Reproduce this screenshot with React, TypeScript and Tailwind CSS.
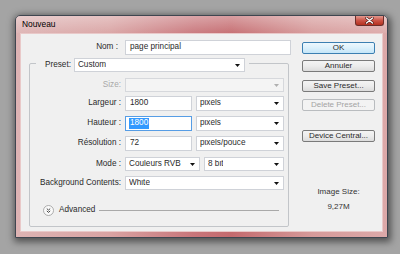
import React from "react";

const Arrow = ({ gray }: { gray?: boolean }) => (
  <svg width="5" height="3" viewBox="0 0 5 3" className="shrink-0">
    <path d="M0 0H5L2.5 3Z" fill={gray ? "#b0b0b0" : "#111"} />
  </svg>
);

function Dropdown({ className, text, disabled }: { className: string; text?: string; disabled?: boolean }) {
  return (
    <div
      className={`flex items-center justify-between border pl-[3px] pr-[4px] ${
        disabled ? "bg-[#f4f4f4] border-[#d6d8dc]" : "bg-white border-[#cfd2d8]"
      } ${className}`}
    >
      <span className="truncate leading-none">{text}</span>
      <Arrow gray={disabled} />
    </div>
  );
}

function Input({ className, text, focused }: { className: string; text: string; focused?: boolean }) {
  return (
    <div
      className={`flex items-center bg-white border pl-[3px] ${
        focused ? "border-[#569de5]" : "border-[#cfd2d8]"
      } ${className}`}
    >
      {focused ? (
        <span className="bg-[#3399ff] text-white leading-none px-[1px] py-[1px]">{text}</span>
      ) : (
        <span className="leading-none pl-[1px]">{text}</span>
      )}
    </div>
  );
}

function Button({ text, primary, disabled, className }: { text: string; primary?: boolean; disabled?: boolean; className: string }) {
  return (
    <div
      className={`h-[12px] w-[73px] flex items-center justify-center rounded-[2px] border leading-none ${
        primary
          ? "border-[#3c7fb1] bg-[linear-gradient(#eef8fd,#dcf0fb_50%,#c4e6f8)]"
          : disabled
          ? "border-[#b9bcbf] bg-[#f3f3f3] text-[#a3a3a3]"
          : "border-[#7a7a7a] bg-[linear-gradient(#f4f4f4,#ececec_50%,#dcdcdc)]"
      } ${className}`}
    >
      {text}
    </div>
  );
}

function Row({ label, children, className, gray }: { label: string; children: React.ReactNode; className: string; gray?: boolean }) {
  return (
    <div className={`flex items-center ${className}`}>
      <div className={`w-[92px] text-right pr-[1px] leading-none ${gray ? "text-[#a8a8a8]" : ""}`}>{label}</div>
      <div className="ml-[3px] flex items-center gap-[4px]">{children}</div>
    </div>
  );
}

export default function App() {
  return (
    <div className="w-[400px] h-[254px] overflow-hidden bg-[#a4a4a4] pt-[15px] pl-[15px] font-['Liberation_Sans',Arial,sans-serif] text-[8.2px] text-[#2a2a2a]">
      <div className="w-[373px] h-[223px] flex flex-col rounded-t-[5px] border border-[#3f4650] bg-[linear-gradient(90deg,#ddb3b3_0%,#d9a3a3_25%,#c8757a_48%,#c46a6e_58%,#d69a9a_80%,#dca9a9_100%)] shadow-[1px_2px_7px_2px_rgba(0,0,0,0.5)]">
        {/* Title bar */}
        <div className="h-[17px] flex items-start justify-between bg-[linear-gradient(rgba(255,255,255,0.35),rgba(255,255,255,0.05))] rounded-t-[4px]">
          <span className="pl-[6px] pt-[4px] text-[8.4px] leading-none text-black">Nouveau</span>
          <div className="mr-[3px] w-[29px] h-[10px] flex items-center justify-center rounded-b-[3px] border border-t-0 border-[#6b2e2a] bg-[linear-gradient(#e49a90,#cc5346_50%,#b4301f)]">
            <svg width="9" height="7" viewBox="0 0 9 7">
              <path d="M1.5 1L7.5 6M7.5 1L1.5 6" stroke="#4a1a16" strokeWidth="2.6" strokeLinecap="round" />
              <path d="M1.5 1L7.5 6M7.5 1L1.5 6" stroke="#fff" strokeWidth="1.4" strokeLinecap="round" />
            </svg>
          </div>
        </div>
        {/* Client area */}
        <div className="mx-[4px] h-[199px] bg-[#f0f0f0] border border-[#e9c9c9] flex">
          {/* Left column */}
          <div className="w-[281px] flex flex-col">
            <div className="mt-[6px] flex items-center">
              <div className="w-[97px] text-right leading-none">Nom :</div>
              <Input className="ml-[7px] w-[166px] h-[15px]" text="page principal" />
            </div>
            <fieldset className="ml-[8px] mt-[3px] w-[260px] h-[169px] border border-[#c2c5c9] rounded-[2px] p-0 m-0 flex flex-col">
              <legend className="ml-[6px] pl-[9px] pr-[4px] h-[10px] p-0">
                <div className="flex items-center h-[14px]">
                  <span className="leading-none">Preset:</span>
                  <Dropdown className="ml-[3px] w-[171px] h-[14px]" text="Custom" />
                </div>
              </legend>
              <Row label="Size:" gray className="mt-[10px]">
                <Dropdown className="w-[159px] h-[14px]" disabled />
              </Row>
              <Row label="Largeur :" className="mt-[4px]">
                <Input className="w-[67px] h-[15px]" text="1800" />
                <Dropdown className="w-[88px] h-[15px]" text="pixels" />
              </Row>
              <Row label="Hauteur :" className="mt-[5px]">
                <Input className="w-[67px] h-[15px]" text="1800" focused />
                <Dropdown className="w-[88px] h-[15px]" text="pixels" />
              </Row>
              <Row label="Résolution :" className="mt-[5px]">
                <Input className="w-[67px] h-[15px]" text="72" />
                <Dropdown className="w-[88px] h-[15px]" text="pixels/pouce" />
              </Row>
              <Row label="Mode :" className="mt-[6px]">
                <Dropdown className="w-[75px] h-[14px]" text="Couleurs RVB" />
                <Dropdown className="w-[80px] h-[14px]" text="8 bit" />
              </Row>
              <Row label="Background Contents:" className="mt-[5px]">
                <Dropdown className="w-[159px] h-[14px]" text="White" />
              </Row>
              <div className="mt-[15px] ml-[13px] mr-[9px] flex items-center">
                <svg width="11" height="11" viewBox="0 0 11 11" className="shrink-0">
                  <circle cx="5.5" cy="5.5" r="5" fill="#fafafa" stroke="#9a9a9a" strokeWidth="0.8" />
                  <path d="M3.8 3.6L5.5 5.1L7.2 3.6M3.8 5.9L5.5 7.4L7.2 5.9" stroke="#333" strokeWidth="0.9" fill="none" />
                </svg>
                <span className="ml-[5px] leading-none">Advanced</span>
                <div className="ml-[4px] flex-1 h-0 border-t border-[#a9a9a9]" />
              </div>
            </fieldset>
          </div>
          {/* Right column */}
          <div className="flex flex-col items-center w-[73px] text-[8px]">
            <Button text="OK" primary className="mt-[8px]" />
            <Button text="Annuler" className="mt-[6px]" />
            <Button text="Save Preset..." className="mt-[8px]" />
            <Button text="Delete Preset..." disabled className="mt-[7px]" />
            <Button text="Device Central..." className="mt-[19px]" />
            <div className="mt-[45px] leading-[10px] text-[8px] text-[#333]">Image Size:</div>
            <div className="mt-[5px] leading-[10px] text-[8px] text-[#333]">9,27M</div>
          </div>
        </div>
      </div>
    </div>
  );
}
